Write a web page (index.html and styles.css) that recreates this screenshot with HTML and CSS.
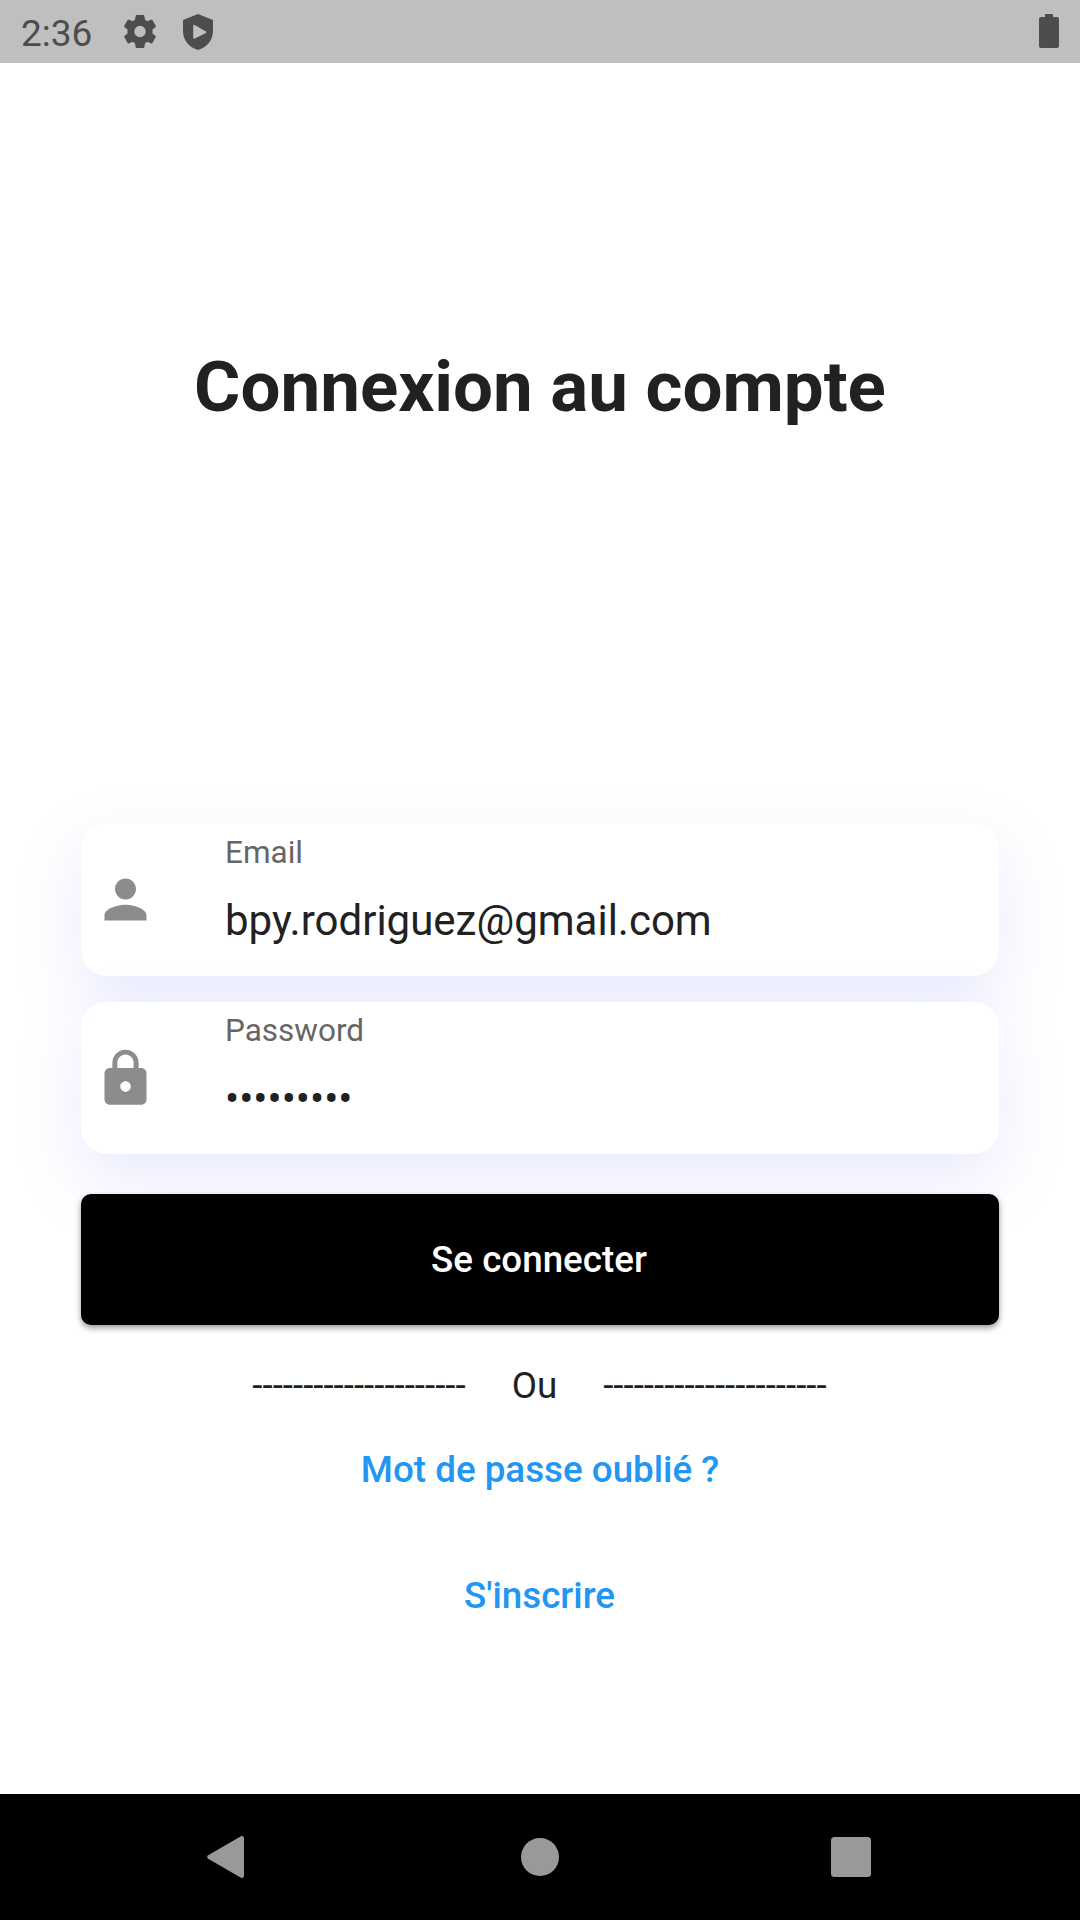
FILE: index.html
```html
<!DOCTYPE html>
<html lang="fr">
<head>
<meta charset="utf-8">
<title>Connexion</title>
<link rel="stylesheet" href="styles.css">
</head>
<body>
<div class="screen">
  <header class="status">
    <span class="time">2:36</span>
    <svg class="gear" viewBox="-16 -16.500 32 33"><path fill-rule="evenodd" d="M-3.500-16.500H3.500Q4.200-16.500 4.300-15.800L5-11.800 7.500-10.300 11.500-12Q12-12.200 12.400-11.600L15.800-5.500Q16-5 15.600-4.600L12.500-2V2L15.600 4.600Q16 5 15.800 5.500L12.400 11.600Q12 12.200 11.500 12L7.500 10.300 5 11.800 4.300 15.800Q4.200 16.500 3.500 16.500H-3.500Q-4.200 16.500-4.300 15.800L-5 11.800-7.500 10.300-11.500 12Q-12 12.200-12.400 11.600L-15.800 5.500Q-16 5-15.600 4.600L-12.500 2V-2L-15.600-4.600Q-16-5-15.800-5.500L-12.400-11.600Q-12-12.200-11.500-12L-7.500-10.300-5-11.800-4.300-15.800Q-4.200-16.500-3.500-16.500zM0-5.700a5.700 5.700 0 1 0 0 11.400a5.700 5.700 0 1 0 0-11.400z"/></svg>
    <svg class="shield" viewBox="0 0 30 36"><path fill-rule="evenodd" d="M15 0L30 6v11c0 9-6 16.500-15 19C6 33.500 0 26 0 17V6zM10.200 12v11.500q0 1.500 1.500 1L23 19q1-.8 0-1.500L11.700 11q-1.500-.6-1.500 1z"/></svg>
    <svg class="battery" viewBox="0 0 20 34"><path d="M6 0h8v3h4q2 0 2 2v27q0 2-2 2H2q-2 0-2-2V5q0-2 2-2h4z"/></svg>
  </header>
  <main class="content">
    <h1 class="title">Connexion au compte</h1>
    <form class="form">
      <div class="field">
        <svg class="icon person" viewBox="0 0 24 24"><path d="M12 12c2.210 0 4-1.790 4-4s-1.790-4-4-4-4 1.790-4 4 1.790 4 4 4zm0 2c-2.670 0-8 1.340-8 4v2h16v-2c0-2.660-5.330-4-8-4z"/></svg>
        <div class="text"><label class="label">Email</label><span class="value">bpy.rodriguez@gmail.com</span></div>
      </div>
      <div class="field">
        <svg class="icon" viewBox="0 0 24 24"><path d="M18 8h-1V6c0-2.760-2.240-5-5-5S7 3.240 7 6v2H6c-1.100 0-2 .9-2 2v10c0 1.100.9 2 2 2h12c1.100 0 2-.9 2-2V10c0-1.100-.9-2-2-2zm-6 9c-1.100 0-2-.9-2-2s.9-2 2-2 2 .9 2 2-.9 2-2 2zm3.100-9H8.900V6c0-1.710 1.390-3.100 3.100-3.100s3.100 1.390 3.100 3.100z"/></svg>
        <div class="text"><label class="label">Password</label><span class="value">•••••••••</span></div>
      </div>
      <button class="submit" type="button">Se connecter</button>
    </form>
    <div class="divider"><span>---------------------</span><span class="or">Ou</span><span>----------------------</span></div>
    <a class="link">Mot de passe oublié ?</a>
    <a class="link signup">S'inscrire</a>
  </main>
  <nav class="nav">
    <svg class="back" viewBox="0 0 37 42"><path d="M33.500.4Q37-.8 37 3v36q0 3.800-3.500 2.600L1.200 22.800Q-.8 21 1.200 19.200z"/></svg>
    <svg class="home" viewBox="0 0 38 38"><circle cx="19" cy="19" r="19"/></svg>
    <svg class="recent" viewBox="0 0 40 40"><rect width="40" height="40" rx="3.500"/></svg>
  </nav>
</div>
</body>
</html>
```
FILE: styles.css
```css
* { box-sizing: border-box; }
body { margin: 0; background: #fff; }
.screen { width: 1080px; height: 1920px; display: flex; flex-direction: column; font-family: Roboto, sans-serif; color: #212121; overflow: hidden; }
.status { height: 63px; flex: none; background: #bfbfbf; display: flex; align-items: center; padding: 0 21px; color: #4d4d4d; fill: #4d4d4d; }
.time { font-size: 37px; width: 103px; padding-top: 3px; }
.gear { width: 32px; height: 33px; margin-right: 27px; }
.shield { width: 30px; height: 36px; }
.battery { width: 20px; height: 34px; margin: 0 0 1px auto; }
.content { flex: 1; display: flex; flex-direction: column; align-items: center; }
.title { margin: 282px 0 0; font-size: 70.875px; line-height: 84px; font-weight: 700; }
.form { width: 918px; margin-top: 395px; display: flex; flex-direction: column; }
.field { height: 152px; border-radius: 26px; background: #fff; margin-bottom: 26px; display: flex; align-items: center; box-shadow: 0 26px 66px rgba(143, 148, 251, .2); }
.icon { width: 63px; height: 63px; margin-left: 13px; fill: #8c8c8c; }
.person { margin-bottom: 2px; }
.text { height: 100%; margin-left: 68px; display: flex; flex-direction: column; }
.label { font-size: 31.500px; line-height: 36px; margin-top: 11px; color: #666; }
.value { font-size: 42px; line-height: 50px; margin-top: 25px; }
.submit { height: 131px; margin-top: 14px; padding: 0 2px 0 0; border: 0; border-radius: 10px; background: #000; color: #fff; font: 500 36.750px Roboto, sans-serif; box-shadow: 0 3px 6px #0006; }
.divider { display: flex; align-items: center; margin: 39px 1px 0 0; font-size: 36.750px; line-height: 44px; }
.or { margin: 0 46px; }
.link { font-size: 36.750px; line-height: 44px; font-weight: 500; color: #2196f3; margin: 40px 0 0; }
.signup { margin: 82px 1px 0 0; }
.nav { height: 126px; flex: none; background: #000; display: flex; align-items: center; padding: 0 209px 0 207px; fill: #999; justify-content: space-between; }
.back { width: 37px; height: 42px; }
.home { width: 38px; height: 38px; margin-left: 4px; }
.recent { width: 40px; height: 40px; }
```
